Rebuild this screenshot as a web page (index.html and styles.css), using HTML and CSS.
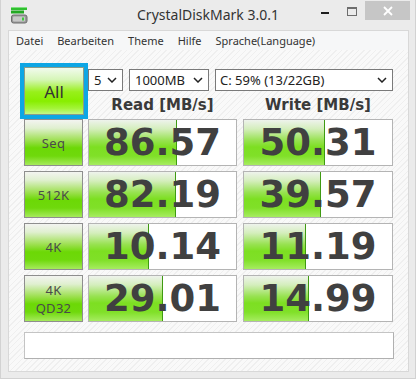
FILE: index.html
```html
<!DOCTYPE html>
<html>
<head>
<meta charset="utf-8">
<link rel="stylesheet" href="styles.css">
</head>
<body>
<div class="window">
  <div class="titlebar">
    <div class="tb-left">
      <svg class="app-icon" width="17" height="17" viewBox="0 0 17 17">
        <rect x="0" y="0" width="16" height="3" fill="#2fbf2f"/>
        <rect x="0" y="0" width="16" height="1" fill="#7fe07f"/>
        <rect x="0" y="3.5" width="13" height="3" fill="#23a823"/>
        <rect x="0.5" y="8" width="15.5" height="8" rx="2" fill="#9a9a9a" stroke="#6e6e6e"/>
        <rect x="2" y="9.5" width="12" height="5" rx="1" fill="#c8c8c8"/>
        <rect x="11" y="10.5" width="2" height="3" fill="#3cc83c"/>
      </svg>
    </div>
    <div class="title">CrystalDiskMark 3.0.1</div>
    <div class="controls">
      <span class="min"></span>
      <span class="max"></span>
      <span class="close">
        <svg width="10" height="10" viewBox="0 0 10 10"><path d="M1 1 L9 9 M9 1 L1 9" stroke="#fff" stroke-width="1.8"/></svg>
      </span>
    </div>
  </div>
  <div class="frame">
    <div class="menubar">
      <span>Datei</span><span>Bearbeiten</span><span>Theme</span><span>Hilfe</span><span>Sprache(Language)</span>
    </div>
    <div class="client">
      <div class="top">
        <div class="all-wrap"><div class="btn all">All</div></div>
        <div class="top-right">
          <div class="selects">
            <div class="select s-count"><span>5</span><svg class="chev" width="10" height="6" viewBox="0 0 10 6"><path d="M1 1 L5 5 L9 1" fill="none" stroke="#222" stroke-width="1.5"/></svg></div>
            <div class="select s-size"><span>1000MB</span><svg class="chev" width="10" height="6" viewBox="0 0 10 6"><path d="M1 1 L5 5 L9 1" fill="none" stroke="#222" stroke-width="1.5"/></svg></div>
            <div class="select s-drive"><span>C: 59% (13/22GB)</span><svg class="chev" width="10" height="6" viewBox="0 0 10 6"><path d="M1 1 L5 5 L9 1" fill="none" stroke="#222" stroke-width="1.5"/></svg></div>
          </div>
          <div class="heads">
            <div class="head read">Read [MB/s]</div>
            <div class="head write">Write [MB/s]</div>
          </div>
        </div>
      </div>
      <div class="rows">
        <div class="row">
          <div class="btn label">Seq</div>
          <div class="score read" style="--w:87px">86.57</div>
          <div class="score write" style="--w:80px">50.31</div>
        </div>
        <div class="row">
          <div class="btn label">512K</div>
          <div class="score read" style="--w:86px">82.19</div>
          <div class="score write" style="--w:76px">39.57</div>
        </div>
        <div class="row">
          <div class="btn label">4K</div>
          <div class="score read" style="--w:59px">10.14</div>
          <div class="score write" style="--w:61px">11.19</div>
        </div>
        <div class="row">
          <div class="btn label two">4K<br>QD32</div>
          <div class="score read" style="--w:73px">29.01</div>
          <div class="score write" style="--w:64px">14.99</div>
        </div>
      </div>
      <div class="comment"></div>
    </div>
  </div>
</div>
</body>
</html>
```

FILE: styles.css
```css
* { box-sizing: border-box; }
html, body { margin: 0; padding: 0; }
body {
  background: #ebebeb;
  font-family: "Noto Sans", "Open Sans", sans-serif;
  color: #222;
}
.window {
  width: 416px;
  height: 379px;
  background: #ebebeb;
  border: 1px solid #d2d2d2;
  border-top: none;
  overflow: hidden;
}
.titlebar {
  height: 30px;
  display: grid;
  grid-template-columns: 1fr auto 1fr;
  align-items: start;
}
.tb-left { padding: 7px 0 0 10px; }
.app-icon { display: block; }
.title {
  font-size: 14px;
  line-height: 30px;
  color: #333;
}
.controls {
  display: flex;
  justify-content: flex-end;
  align-items: flex-start;
  padding-right: 5px;
}
.min {
  width: 8px;
  height: 2px;
  background: #1e1e1e;
  margin-top: 12px;
}
.max {
  width: 10px;
  height: 9px;
  border: 1px solid #6d6d6d;
  border-top-width: 2px;
  margin: 7px 0 0 18px;
}
.close {
  width: 45px;
  height: 19px;
  margin: 1px 0 0 8px;
  background: #c6c6c6;
  display: flex;
  align-items: center;
  justify-content: center;
}
.close svg { display: block; }

.frame {
  margin: 0 6px 0 7px;
  border: 1px solid #d8d8d8;
}
.menubar {
  height: 19px;
  background: #f6f7f8;
  display: flex;
  gap: 14px;
  padding-left: 7px;
  font-size: 11px;
  line-height: 20px;
  color: #333;
}
.client {
  height: 321px;
  padding: 13px 0 0 15px;
  background-color: #f9f9f9;
  background-image: repeating-linear-gradient(135deg, #f9f9f9 0px, #f9f9f9 3px, #efefef 3px, #efefef 4px);
}
.top {
  display: flex;
  height: 56px;
}
.all-wrap {
  width: 68px;
  height: 56px;
  margin-left: -4px;
  border: 4px solid #0ea6e4;
}
.btn {
  border: 1px solid #8e8e8e;
  display: flex;
  align-items: center;
  justify-content: center;
  text-align: center;
  color: #4a4a4a;
  background: linear-gradient(to bottom, #f3f4f1 0%, #e0f0d0 18%, #9ee052 45%, #6cd806 62%, #6fd90c 80%, #a6ea5c 100%);
}
.all {
  width: 60px;
  height: 48px;
  font-size: 17px;
  color: #333;
  border-color: #8c9c88;
  background: linear-gradient(to bottom, #f2fbee 0%, #d6f6b8 25%, #98f01a 52%, #88ee00 72%, #a4f43a 88%, #c4f88a 100%);
}
.top-right {
  display: flex;
  flex-direction: column;
}
.selects {
  display: flex;
  gap: 6px;
  margin-top: 6px;
  height: 22px;
}
.select {
  height: 22px;
  border: 1px solid #7a7a7a;
  background: #fff;
  display: flex;
  align-items: center;
  justify-content: space-between;
  padding: 0 5px 0 5px;
  font-size: 13px;
  color: #222;
}
.chev { display: block; }
.s-count { width: 35px; }
.s-size { width: 80px; }
.s-drive { width: 178px; padding-left: 4px; }
.heads {
  display: flex;
  height: 28px;
  align-items: center;
}
.head {
  font-family: "DejaVu Sans", Verdana, sans-serif;
  font-weight: bold;
  font-size: 15px;
  color: #3a3a3a;
  text-align: center;
}
.head.read { width: 149px; margin-right: 6px; }
.head.write { width: 150px; }

.rows {
  display: flex;
  flex-direction: column;
  gap: 5px;
}
.row {
  display: flex;
  height: 47px;
}
.label {
  width: 59px;
  height: 47px;
  margin-right: 5px;
  font-size: 13px;
  letter-spacing: 0.3px;
}
.label.two { line-height: 18px; }
.score {
  height: 47px;
  border: 1px solid #b4b4b4;
  background-color: #fff;
  background-image:
    linear-gradient(#3f9a12, #3f9a12),
    linear-gradient(to bottom, #eef3ec 0%, #d4eebc 20%, #98e252 45%, #7ddf22 60%, #80e028 80%, #a6ec60 100%);
  background-repeat: no-repeat;
  background-size: 1px 100%, var(--w) 100%;
  background-position: var(--w) 0, 0 0;
  font-family: "DejaVu Sans", Verdana, sans-serif;
  font-weight: bold;
  font-size: 37px;
  line-height: 42px;
  padding-top: 2px;
  color: #404040;
  text-align: center;
}
.score.read { width: 149px; margin-right: 6px; }
.score.write { width: 150px; }
.comment {
  margin-top: 10px;
  width: 370px;
  height: 27px;
  background: #fff;
  border: 1px solid #b0b0b0;
  border-top-color: #c4c4c4;
  border-left-color: #c4c4c4;
}
```
